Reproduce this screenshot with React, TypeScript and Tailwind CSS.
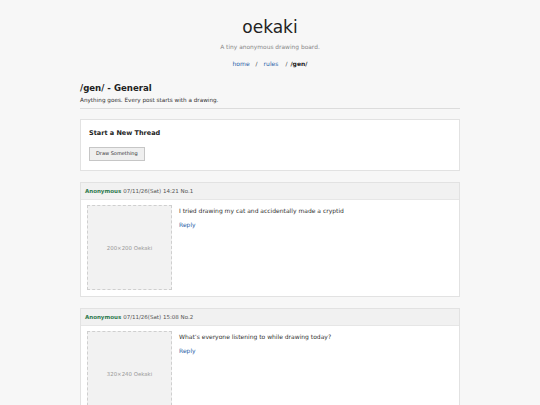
import React from "react";

interface Post {
  no: number;
  date: string;
  text: string;
  size: string;
}

const posts: Post[] = [
  { no: 1, date: "07/11/26(Sat) 14:21", text: "I tried drawing my cat and accidentally made a cryptid", size: "200×200 Oekaki" },
  { no: 2, date: "07/11/26(Sat) 15:08", text: "What’s everyone listening to while drawing today?", size: "320×240 Oekaki" },
];

function PostCard({ post }: { post: Post }) {
  return (
    <div className="mb-[11px] border border-[#e2e2e2] bg-white">
      <div className="flex h-[17px] items-center border-b border-[#e6e6e6] bg-[#f1f1f1] px-[4px] text-[5.5px] text-[#555]">
        <span className="font-bold text-[#2f7a4e]">Anonymous</span>
        <span className="ml-[2px]">{post.date} No.{post.no}</span>
      </div>
      <div className="flex gap-[7px] px-[6px] pt-[5px] pb-[6px]">
        <div className="flex h-[85px] w-[85px] shrink-0 items-center justify-center border border-dashed border-[#cfcfcf] bg-[#f2f2f2] text-[5.4px] text-[#999]">
          {post.size}
        </div>
        <div className="pt-[2px] text-[6px] leading-[8px] text-[#333]">
          <p>{post.text}</p>
          <a className="mt-[6px] block text-[#2a62a8]">Reply</a>
        </div>
      </div>
    </div>
  );
}

export default function App() {
  return (
    <div className="min-h-[405px] bg-[#f7f7f7] font-['DejaVu_Sans',Verdana,sans-serif] text-[#222]">
      <div className="mx-auto w-[380px] pt-[17px]">
        <div className="text-center">
          <h1 className="text-[17px] leading-[20px] text-[#222]">oekaki</h1>
          <p className="mt-[6px] text-[5.9px] leading-[8px] text-[#888]">A tiny anonymous drawing board.</p>
          <nav className="mt-[9px] text-[6px] leading-[8px] text-[#444]">
            <a className="text-[#2a62a8]">home</a>
            <span className="mx-[6px]">/</span>
            <a className="text-[#2a62a8]">rules</a>
            <span className="ml-[7px] mr-[3px]">/</span>
            <span className="font-bold text-[#222]">/gen/</span>
          </nav>
        </div>

        <div className="mt-[15px] border-b border-[#dcdcdc] pb-[4px]">
          <h2 className="text-[8.6px] font-bold leading-[11px]">/gen/ - General</h2>
          <p className="mt-[2px] text-[5.7px] leading-[8px] text-[#333]">Anything goes. Every post starts with a drawing.</p>
        </div>

        <div className="mt-[10px] mb-[11px] border border-[#e2e2e2] bg-white px-[8px] pt-[8px] pb-[8px]">
          <h3 className="text-[6.5px] font-bold leading-[10px]">Start a New Thread</h3>
          <button className="mt-[9px] h-[14px] border border-[#c6c6c6] bg-[#efefef] px-[6px] text-[5px] text-[#333]">
            Draw Something
          </button>
        </div>

        {posts.map((p) => (
          <PostCard key={p.no} post={p} />
        ))}
      </div>
    </div>
  );
}
